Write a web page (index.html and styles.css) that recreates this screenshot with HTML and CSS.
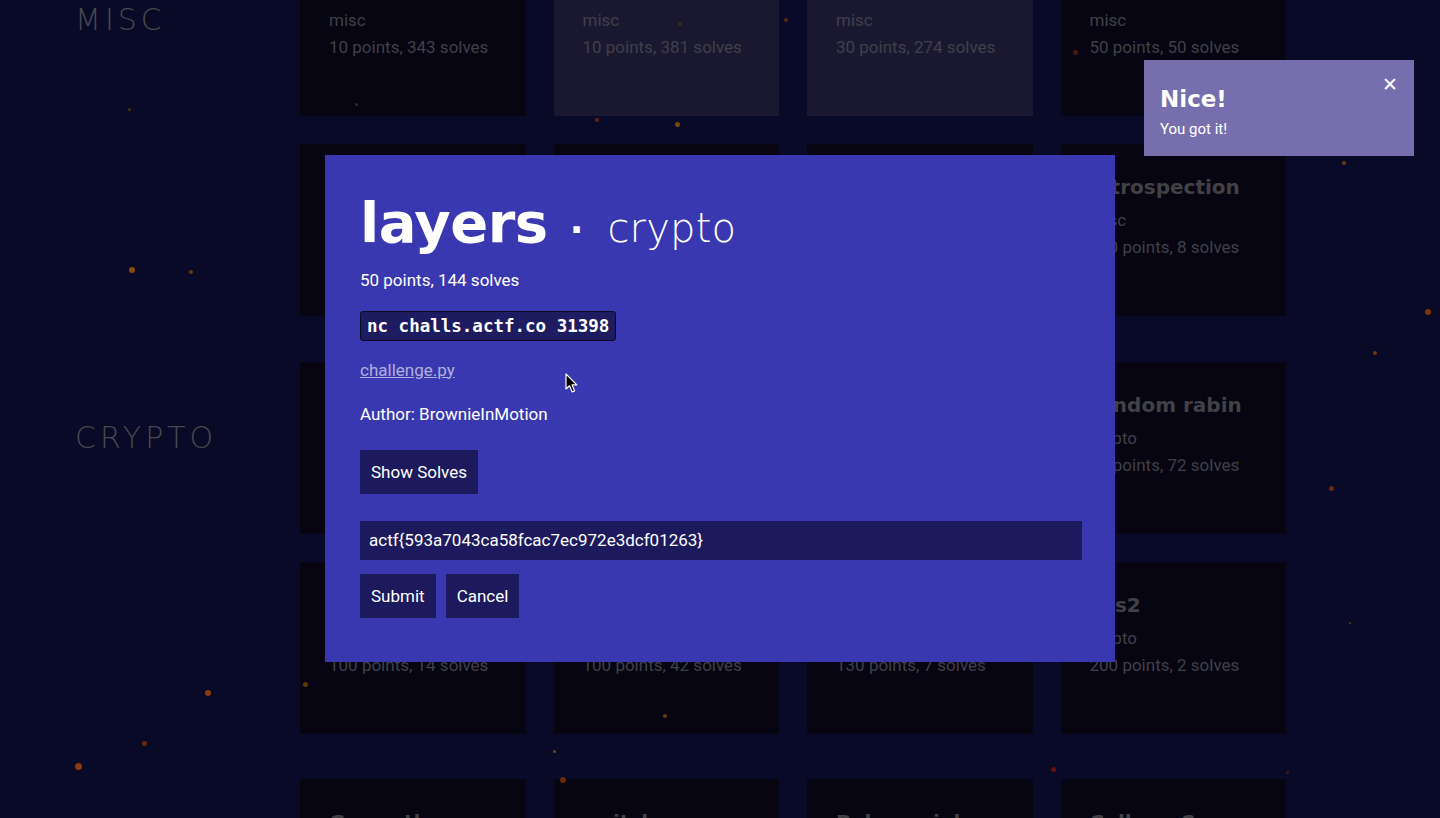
FILE: index.html
```html
<!DOCTYPE html>
<html lang="en">
<head>
<meta charset="utf-8">
<title>Challenges</title>
<link rel="stylesheet" href="styles.css">
</head>
<body>
<main class="page">
  <section class="category">
    <h2 class="cat-label">MISC</h2>
    <div class="grid">
      <div class="card"><h3>Sanity Check</h3><p>misc</p><p>10 points, 343 solves</p></div>
      <div class="card solved"><h3>Discord</h3><p>misc</p><p>10 points, 381 solves</p></div>
      <div class="card solved"><h3>meow</h3><p>misc</p><p>30 points, 274 solves</p></div>
      <div class="card"><h3>Simon Says</h3><p>misc</p><p>50 points, 50 solves</p></div>
      <div class="card"><h3>obligatory</h3><p>misc</p><p>80 points, 96 solves</p></div>
      <div class="card"><h3>better me</h3><p>misc</p><p>90 points, 41 solves</p></div>
      <div class="card"><h3>kompromized</h3><p>misc</p><p>120 points, 19 solves</p></div>
      <div class="card"><h3>introspection</h3><p>misc</p><p>150 points, 8 solves</p></div>
    </div>
  </section>
  <section class="category">
    <h2 class="cat-label">CRYPTO</h2>
    <div class="grid">
      <div class="card"><h3>ranch</h3><p>crypto</p><p>20 points, 330 solves</p></div>
      <div class="card"><h3>impossible</h3><p>crypto</p><p>40 points, 180 solves</p></div>
      <div class="card"><h3>layers</h3><p>crypto</p><p>50 points, 144 solves</p></div>
      <div class="card"><h3>random rabin</h3><p>crypto</p><p>50 points, 72 solves</p></div>
      <div class="card"><h3>lazy lagrange</h3><p>crypto</p><p>100 points, 14 solves</p></div>
      <div class="card"><h3>Royal Society</h3><p>crypto</p><p>100 points, 42 solves</p></div>
      <div class="card"><h3>tau</h3><p>crypto</p><p>130 points, 7 solves</p></div>
      <div class="card"><h3>ecs2</h3><p>crypto</p><p>200 points, 2 solves</p></div>
    </div>
  </section>
  <section class="category">
    <h2 class="cat-label">WEB</h2>
    <div class="grid">
      <div class="card"><h3>Guess the</h3><p>web</p><p>20 points, 300 solves</p></div>
      <div class="card"><h3>switcheroo</h3><p>web</p><p>40 points, 200 solves</p></div>
      <div class="card"><h3>Polynomials</h3><p>web</p><p>60 points, 100 solves</p></div>
      <div class="card"><h3>Collage Case</h3><p>web</p><p>80 points, 50 solves</p></div>
    </div>
  </section>
</main>

<div class="particles">
  <span class="dot d1"></span><span class="dot d2"></span><span class="dot d3"></span>
  <span class="dot d4"></span><span class="dot d5"></span><span class="dot d6"></span>
  <span class="dot d7"></span><span class="dot d8"></span><span class="dot d9"></span>
  <span class="dot d10"></span><span class="dot d11"></span><span class="dot d12"></span>
  <span class="dot d13"></span><span class="dot d14"></span><span class="dot d15"></span>
  <span class="dot d16"></span><span class="dot d17"></span><span class="dot d18"></span>
  <span class="dot d19"></span><span class="dot d20"></span><span class="dot d21"></span>
  <span class="dot d22"></span><span class="dot d23"></span><span class="dot d24"></span>
</div>

<div class="backdrop">
  <div class="modal">
    <h1 class="modal-title"><span class="chal-name">layers</span><span class="sep">·</span><span class="chal-cat">crypto</span></h1>
    <p class="meta">50 points, 144 solves</p>
    <p class="code-line"><code>nc challs.actf.co 31398</code></p>
    <p class="meta"><a class="file-link" href="#">challenge.py</a></p>
    <p class="meta">Author: BrownieInMotion</p>
    <div class="row"><button class="btn">Show Solves</button></div>
    <input class="flag-input" type="text" value="actf{593a7043ca58fcac7ec972e3dcf01263}">
    <div class="row actions"><button class="btn">Submit</button><button class="btn">Cancel</button></div>
  </div>
</div>

<div class="toast">
  <div class="toast-title">Nice!</div>
  <div class="toast-body">You got it!</div>
  <span class="toast-close">✕</span>
</div>

<svg class="cursor" width="14" height="22" viewBox="0 0 14 22" xmlns="http://www.w3.org/2000/svg">
  <path d="M1 1 L1 16 L4.5 12.8 L7.2 19 L9.6 18 L7 11.9 L11.8 11.9 Z" fill="#000" stroke="#fff" stroke-width="1.2" stroke-linejoin="round"/>
</svg>
</body>
</html>
```

FILE: styles.css
```css
* { box-sizing: border-box; }
html, body {
  margin: 0;
  padding: 0;
  height: 100%;
  overflow: hidden;
  background: #090a27;
  font-family: Roboto, "Noto Sans", sans-serif;
}
.page {
  display: flex;
  flex-direction: column;
  gap: 45.5px;
  margin-top: -56px;
}
.category {
  display: grid;
  grid-template-columns: 300px 986px;
}
.cat-label {
  margin: 61px 0 0 0;
  padding-left: 75px;
  font-family: "DejaVu Sans", sans-serif;
  font-weight: 300;
  font-size: 30px;
  line-height: 30px;
  letter-spacing: 4px;
  color: #48484e;
}
.grid {
  display: grid;
  grid-template-columns: repeat(4, 1fr);
  grid-auto-rows: 172px;
  gap: 28px;
}
.card {
  background: #060511;
  padding: 31px 20px 0 29px;
  overflow: hidden;
}
.card.solved { background: #1a1830; }
.card h3 {
  margin: 0 0 8px 0;
  font-family: "DejaVu Sans", sans-serif;
  font-weight: 700;
  font-size: 20px;
  line-height: 24px;
  color: #414146;
  white-space: nowrap;
}
.card p {
  margin: 0;
  font-size: 17px;
  line-height: 27px;
  color: #40404a;
}

.particles {
  position: fixed;
  inset: 0;
  pointer-events: none;
}
.dot {
  position: absolute;
  width: 5px;
  height: 5px;
  border-radius: 50%;
  background: #6b3a0c;
}
.d1 { left: 128px; top: 108px; width: 3px; height: 3px; background: #4a3210; }
.d2 { left: 355px; top: 103px; width: 3px; height: 3px; background: #3e2a10; }
.d3 { left: 595px; top: 118px; width: 4px; height: 4px; background: #6a1e0e; }
.d4 { left: 675px; top: 122px; width: 5px; height: 5px; background: #7a4a0c; }
.d5 { left: 678px; top: 22px; width: 4px; height: 4px; background: #3a3020; }
.d6 { left: 784px; top: 18px; width: 4px; height: 4px; background: #5a2a0c; }
.d7 { left: 1073px; top: 50px; width: 5px; height: 5px; background: #4a1a0c; }
.d8 { left: 129px; top: 267px; width: 6px; height: 6px; background: #8a4a0c; }
.d9 { left: 189px; top: 270px; width: 4px; height: 4px; background: #6a3a0c; }
.d10 { left: 1425px; top: 309px; width: 6px; height: 6px; background: #7a3a0c; }
.d11 { left: 1373px; top: 351px; width: 4px; height: 4px; background: #6a3a0c; }
.d12 { left: 1342px; top: 161px; width: 4px; height: 4px; background: #6a3a0c; }
.d13 { left: 1329px; top: 486px; width: 5px; height: 5px; background: #6a2a0c; }
.d14 { left: 1236px; top: 461px; width: 3px; height: 3px; background: #3a3010; }
.d15 { left: 1349px; top: 622px; width: 2px; height: 2px; background: #5a4010; }
.d16 { left: 303px; top: 682px; width: 5px; height: 5px; background: #5a3a0c; }
.d17 { left: 205px; top: 690px; width: 6px; height: 6px; background: #8a3a0c; }
.d18 { left: 142px; top: 741px; width: 5px; height: 5px; background: #6a2a0c; }
.d19 { left: 75px; top: 763px; width: 7px; height: 7px; background: #8a3a0c; }
.d20 { left: 553px; top: 750px; width: 3px; height: 3px; background: #6a4a10; }
.d21 { left: 560px; top: 777px; width: 6px; height: 6px; background: #6a2a0c; }
.d22 { left: 663px; top: 714px; width: 4px; height: 4px; background: #6a3a0c; }
.d23 { left: 1051px; top: 767px; width: 5px; height: 5px; background: #6a0e0c; }
.d24 { left: 1286px; top: 771px; width: 3px; height: 3px; background: #4a1a0c; }

.backdrop {
  position: fixed;
  inset: 0;
  display: flex;
  align-items: center;
  justify-content: center;
  padding-bottom: 2px;
}
.modal {
  width: 790px;
  background: #3a38b0;
  padding: 36px 33px 44px 35px;
  color: #fff;
}
.modal-title {
  margin: 0 0 12px 0;
  display: flex;
  align-items: baseline;
  height: 64px;
  line-height: 64px;
  font-family: "DejaVu Sans", sans-serif;
  font-weight: 400;
}
.chal-name {
  font-weight: 700;
  font-size: 56px;
  letter-spacing: -0.5px;
}
.sep {
  font-size: 36px;
  font-weight: 700;
  margin: 0 24px 0 22px;
}
.chal-cat {
  font-weight: 200;
  font-size: 40px;
  letter-spacing: 0.2px;
}
.meta {
  margin: 0 0 17px 0;
  font-size: 17px;
  line-height: 27px;
}
.code-line {
  margin: 0 0 16px 0;
  line-height: 0;
}
.code-line code {
  display: inline-block;
  background: #1e1c60;
  border: 1px solid #0a0920;
  border-radius: 3px;
  padding: 0 6px;
  font-family: "DejaVu Sans Mono", monospace;
  font-weight: 700;
  font-size: 17.5px;
  line-height: 28px;
  color: #fff;
}
.file-link {
  color: #b2b0da;
  text-decoration: underline;
}
.row {
  display: flex;
  gap: 10px;
  margin: 22px 0 27px 0;
}
.btn {
  height: 44px;
  padding: 0 11px;
  border: none;
  background: #1c1a5c;
  color: #fff;
  font-family: Roboto, "Noto Sans", sans-serif;
  font-size: 17px;
}
.flag-input {
  display: block;
  width: 722px;
  height: 39px;
  border: none;
  background: #1c1a5c;
  color: #fff;
  padding: 0 9px;
  font-family: Roboto, "Noto Sans", sans-serif;
  font-size: 17px;
  outline: none;
}
.actions {
  margin: 14px 0 0 0;
}

.toast {
  position: fixed;
  top: 60px;
  right: 26px;
  width: 270px;
  height: 96px;
  background: #776fad;
  color: #fff;
  padding: 25px 16px 0 16px;
}
.toast-title {
  font-family: "DejaVu Sans", sans-serif;
  font-weight: 700;
  font-size: 23px;
  line-height: 28px;
}
.toast-body {
  margin-top: 6px;
  font-size: 15px;
  line-height: 20px;
}
.toast-close {
  position: absolute;
  top: 13px;
  right: 16px;
  font-family: "DejaVu Sans", sans-serif;
  font-weight: 700;
  font-size: 19px;
  line-height: 22px;
}
.cursor {
  position: fixed;
  left: 565px;
  top: 373px;
}
```
